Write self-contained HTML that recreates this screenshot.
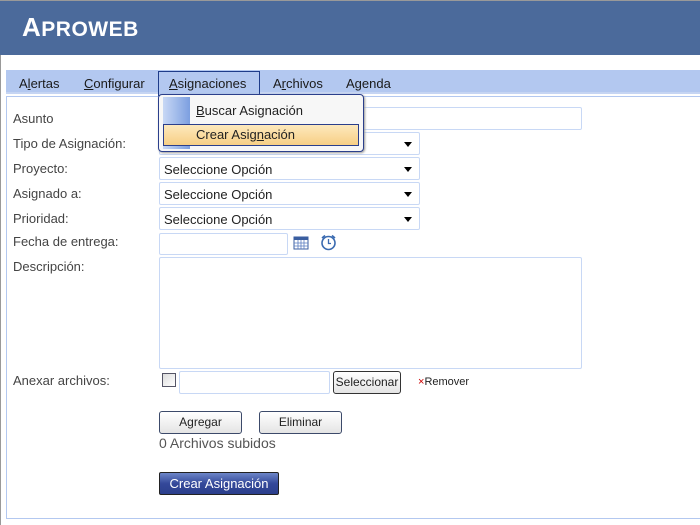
<!DOCTYPE html><html><head><style>
*{box-sizing:border-box}body{margin:0;width:700px;height:525px;background:#fff;font-family:"Liberation Sans",sans-serif;position:relative;overflow:hidden}
.a{position:absolute}
.hdr{left:0;top:0;width:700px;height:55px;background:#4b6a9b;border-top:1px solid #999}
.logo{left:22px;top:12px;color:#fff;font-weight:bold;font-size:26px;letter-spacing:.5px}
.logo small{font-size:21px}
.menu{left:6px;top:70px;width:694px;height:24px;background:#b3c8f0;border-bottom:2px solid #c6d5f3}
.mi{top:76px;font-size:13px;color:#1a1a1a}
.box{left:6px;top:96px;width:700px;height:423px;border:1px solid #b3c8f0}
.lbl{left:13px;font-size:13px;color:#444}
.in{border:1px solid #c8d8f5;border-radius:2px;background:#fff}
.sel{font-size:13px;color:#222;padding:4px 4px}
.arr{position:absolute;right:7px;top:9px;border-left:4px solid transparent;border-right:4px solid transparent;border-top:5px solid #000}
.btn{border:1px solid #3c4a6a;border-radius:3px;background:linear-gradient(#fff,#e4e4e4);font-size:12px;text-align:center;color:#222;line-height:20px}
</style></head><body>
<div class="a" style="left:0;top:0;width:1px;height:525px;background:#999"></div>
<div class="a hdr"></div>
<div class="a logo">A<small>PROWEB</small></div>
<div class="a menu"></div>
<div class="a" style="left:158px;top:71px;width:102px;height:25px;border:1px solid #1e3c8a;background:#b3c8f0"></div>
<div class="a mi" style="left:19px">A<u>l</u>ertas</div>
<div class="a mi" style="left:84px"><u>C</u>onfigurar</div>
<div class="a mi" style="left:169px"><u>A</u>signaciones</div>
<div class="a mi" style="left:273px">A<u>r</u>chivos</div>
<div class="a mi" style="left:346px">A<u>g</u>enda</div>
<div class="a box"></div>
<div class="a lbl" style="top:111px">Asunto</div>
<div class="a lbl" style="top:136px">Tipo de Asignación:</div>
<div class="a lbl" style="top:161px">Proyecto:</div>
<div class="a lbl" style="top:186px">Asignado a:</div>
<div class="a lbl" style="top:211px">Prioridad:</div>
<div class="a lbl" style="top:234px">Fecha de entrega:</div>
<div class="a lbl" style="top:259px">Descripción:</div>
<div class="a lbl" style="top:373px">Anexar archivos:</div>
<div class="a in" style="left:159px;top:107px;width:423px;height:23px"></div>
<div class="a in sel" style="left:159px;top:132px;width:261px;height:23px"><span class="arr"></span></div>
<div class="a in sel" style="left:159px;top:157px;width:261px;height:23px">Seleccione Opción<span class="arr"></span></div>
<div class="a in sel" style="left:159px;top:182px;width:261px;height:23px">Seleccione Opción<span class="arr"></span></div>
<div class="a in sel" style="left:159px;top:207px;width:261px;height:23px">Seleccione Opción<span class="arr"></span></div>
<div class="a in" style="left:159px;top:233px;width:129px;height:22px"></div>
<svg class="a" style="left:293px;top:235px" width="16" height="16"><rect x="1" y="2" width="14" height="12" fill="#fff" stroke="#3a5ea0"/><rect x="1" y="2" width="14" height="3" fill="#3a5ea0"/><path d="M1 8H15M1 11H15M5 5V14M8 5V14M11 5V14" stroke="#5a7cc0" stroke-width=".8"/></svg>
<svg class="a" style="left:320px;top:234px" width="17" height="17"><circle cx="8.5" cy="9" r="6.5" fill="#fff" stroke="#3a6ab0" stroke-width="1.6"/><path d="M8.5 5V9.5H11" stroke="#3a6ab0" stroke-width="1.3" fill="none"/><path d="M2 4L5 1.5M15 4L12 1.5" stroke="#3a6ab0" stroke-width="1.6"/></svg>
<div class="a in" style="left:159px;top:257px;width:423px;height:112px"></div>
<div class="a" style="left:162px;top:373px;width:14px;height:14px;border:1px solid #556;background:linear-gradient(135deg,#ddd,#fff)"></div>
<div class="a in" style="left:179px;top:371px;width:151px;height:23px"></div>
<div class="a btn" style="left:333px;top:371px;width:68px;height:23px;border-color:#333;line-height:21px">Seleccionar</div>
<div class="a" style="left:418px;top:376px;font-size:11px;color:#222"><span style="color:#c00">×</span>Remover</div>
<div class="a btn" style="left:159px;top:411px;width:83px;height:23px">Agregar</div>
<div class="a btn" style="left:259px;top:411px;width:83px;height:23px">Eliminar</div>
<div class="a" style="left:159px;top:435px;font-size:14px;color:#555">0 Archivos subidos</div>
<div class="a" style="left:159px;top:472px;width:120px;height:23px;border:1px solid #222;border-radius:2px;background:linear-gradient(#6d86c8,#34489a 50%,#2b3f8c);color:#fff;font-size:13px;text-align:center;line-height:21px">Crear Asignación</div>
<div class="a" style="left:158px;top:94px;width:206px;height:58px;border:1px solid #2b3f8c;border-radius:4px;background:#f7f7f7;box-shadow:1px 1px 2px #999"></div>
<div class="a" style="left:163px;top:97px;width:27px;height:52px;background:linear-gradient(90deg,#c8d8f5,#7c9fe0)"></div>
<div class="a" style="left:196px;top:103px;font-size:13px;color:#222"><u>B</u>uscar Asignación</div>
<div class="a" style="left:163px;top:124px;width:196px;height:22px;border:1px solid #2b3f8c;background:linear-gradient(#fde9bd,#f7cf85)"></div>
<div class="a" style="left:196px;top:127px;font-size:13px;color:#222">Crear Asig<u>n</u>ación</div>
</body></html>
